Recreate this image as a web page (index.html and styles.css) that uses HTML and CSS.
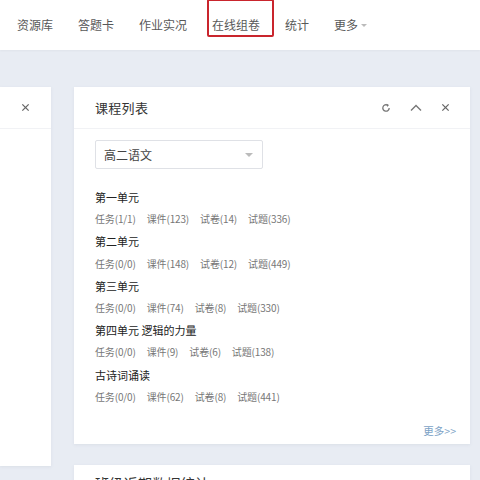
FILE: index.html
```html
<!DOCTYPE html>
<html lang="zh-CN">
<head>
<meta charset="utf-8">
<link rel="stylesheet" href="styles.css">
</head>
<body>
<nav class="topnav">
  <span class="nav-item">资源库</span>
  <span class="nav-item">答题卡</span>
  <span class="nav-item">作业实况</span>
  <span class="nav-item nav-marked">在线组卷</span>
  <span class="nav-item">统计</span>
  <span class="nav-item">更多<span class="caret"></span></span>
</nav>
<main class="board">
  <section class="panel side">
    <div class="panel-head side-head">
      <svg class="ico" viewBox="0 0 10 10" width="9" height="9"><path d="M1.5 1.5 L8.5 8.5 M8.5 1.5 L1.5 8.5" stroke="#666" stroke-width="1.4" fill="none"/></svg>
    </div>
  </section>
  <div class="col">
    <section class="panel course">
      <div class="panel-head">
        <h2 class="panel-title">课程列表</h2>
        <div class="tools">
          <svg class="ico" viewBox="0 0 10 10" width="10" height="10"><path d="M8.2 5 A3.2 3.2 0 1 1 6.6 2.2" stroke="#777" stroke-width="1.3" fill="none"/><path d="M5.6 0.8 L8 2 L6.2 3.9 Z" fill="#777"/></svg>
          <svg class="ico" viewBox="0 0 12 8" width="12" height="8"><path d="M1 6.5 L6 1.5 L11 6.5" stroke="#777" stroke-width="1.4" fill="none"/></svg>
          <svg class="ico" viewBox="0 0 10 10" width="9" height="9"><path d="M1.5 1.5 L8.5 8.5 M8.5 1.5 L1.5 8.5" stroke="#666" stroke-width="1.4" fill="none"/></svg>
        </div>
      </div>
      <div class="panel-body">
        <div class="select">
          <span>高二语文</span>
          <span class="sel-arrow"></span>
        </div>
        <ul class="units">
          <li>
            <div class="unit-name">第一单元</div>
            <div class="stats"><span>任务(1/1)</span><span>课件(123)</span><span>试卷(14)</span><span>试题(336)</span></div>
          </li>
          <li>
            <div class="unit-name">第二单元</div>
            <div class="stats"><span>任务(0/0)</span><span>课件(148)</span><span>试卷(12)</span><span>试题(449)</span></div>
          </li>
          <li>
            <div class="unit-name">第三单元</div>
            <div class="stats"><span>任务(0/0)</span><span>课件(74)</span><span>试卷(8)</span><span>试题(330)</span></div>
          </li>
          <li>
            <div class="unit-name">第四单元 逻辑的力量</div>
            <div class="stats"><span>任务(0/0)</span><span>课件(9)</span><span>试卷(6)</span><span>试题(138)</span></div>
          </li>
          <li>
            <div class="unit-name">古诗词诵读</div>
            <div class="stats"><span>任务(0/0)</span><span>课件(62)</span><span>试卷(8)</span><span>试题(441)</span></div>
          </li>
        </ul>
        <div class="more">更多&gt;&gt;</div>
      </div>
    </section>
    <section class="panel stats-panel">
      <div class="panel-head stats-head">
        <h2 class="panel-title">班级近期数据统计</h2>
      </div>
    </section>
  </div>
</main>
</body>
</html>
```
FILE: styles.css
```css
* { box-sizing: border-box; }
html, body { margin: 0; padding: 0; }
body {
  width: 480px;
  height: 480px;
  overflow: hidden;
  background: #e8ecf3;
  font-family: "Noto Sans CJK SC", "Noto Sans", sans-serif;
  color: #333;
}
.topnav {
  height: 50px;
  background: #fff;
  display: flex;
  align-items: center;
  gap: 25px;
  padding: 0 0 2px 17px;
  box-shadow: 0 1px 2px rgba(0,0,0,0.04);
}
.nav-item {
  font-size: 12px;
  color: #585858;
  position: relative;
  display: flex;
  align-items: center;
}
.nav-marked::after {
  content: "";
  position: absolute;
  left: -5px;
  top: -17px;
  width: 63px;
  height: 34px;
  border: 2px solid #c9252d;
  border-radius: 2px;
}
.caret {
  width: 0; height: 0;
  border-left: 3px solid transparent;
  border-right: 3px solid transparent;
  border-top: 3px solid #bbb;
  margin-left: 3px;
  margin-top: 2px;
}
.board {
  display: flex;
  gap: 23px;
  padding-top: 37px;
}
.panel {
  background: #fff;
  box-shadow: 0 1px 3px rgba(120,130,160,0.12);
}
.side {
  width: 51px;
  height: 379px;
}
.side-head {
  justify-content: flex-end;
  padding-right: 27px;
}
.col {
  width: 396px;
  display: flex;
  flex-direction: column;
  gap: 21px;
}
.panel-head {
  height: 42px;
  display: flex;
  align-items: center;
  justify-content: space-between;
  padding: 0 21px;
  border-bottom: 1px solid #f1f2f5;
}
.panel-title {
  margin: 0;
  font-size: 13px;
  font-weight: normal;
  color: #333;
  letter-spacing: 0.3px;
}
.tools {
  display: flex;
  align-items: center;
  gap: 19px;
  margin-right: -1px;
}
.ico { display: block; }
.panel-body {
  padding: 11px 21px 6px;
}
.select {
  width: 168px;
  height: 29px;
  border: 1px solid #dfe1e6;
  border-radius: 2px;
  display: flex;
  align-items: center;
  justify-content: space-between;
  padding: 0 9px 0 8px;
  font-size: 12px;
  color: #444;
}
.sel-arrow {
  width: 0; height: 0;
  border-left: 4px solid transparent;
  border-right: 4px solid transparent;
  border-top: 4px solid #bbb;
}
.units {
  list-style: none;
  margin: 17px 0 0;
  padding: 0;
}
.units li { line-height: 22.2px; }
.unit-name {
  font-size: 11px;
  color: #222;
}
.stats {
  display: flex;
  gap: 11px;
  font-size: 10px;
  color: #777;
  letter-spacing: -0.15px;
}
.more {
  text-align: right;
  font-size: 10.5px;
  color: #7ca2c6;
  margin-top: 16px;
  margin-right: -7px;
  line-height: 14px;
}
.stats-panel { height: 60px; }
.stats-head {
  align-items: flex-start;
  padding-top: 8px;
}
.stats-head .panel-title { font-size: 14px; line-height: 20px; }
```
